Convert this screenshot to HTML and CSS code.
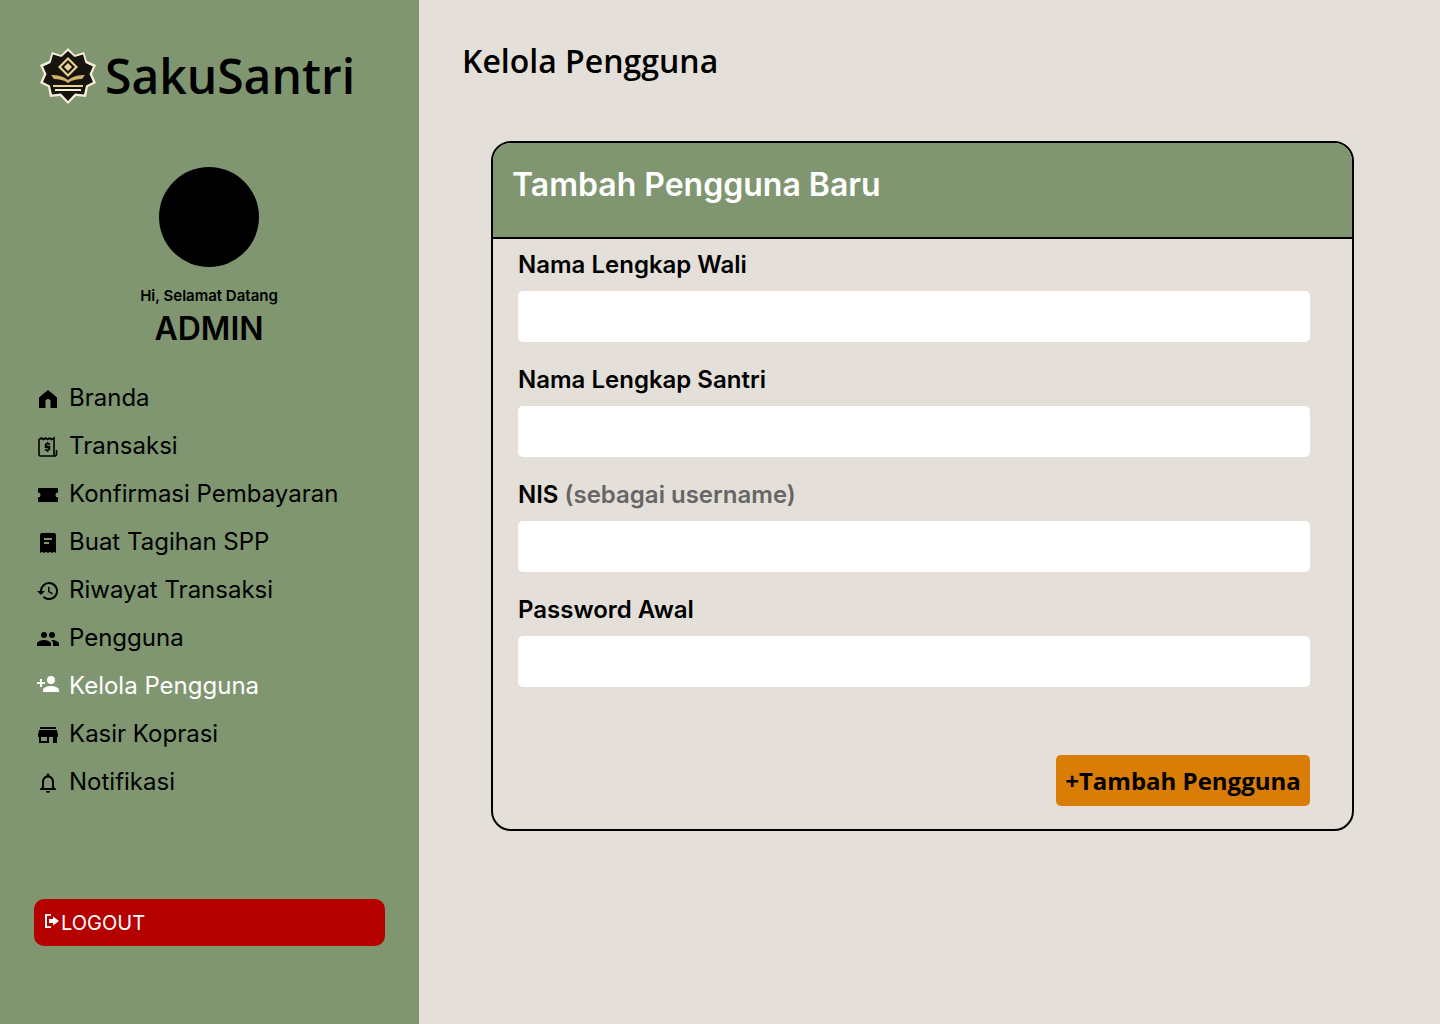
FILE: index.html
```html
<!DOCTYPE html>
<html lang="id">
<head>
    <meta charset="UTF-8">
    <meta name="viewport" content="width=device-width, initial-scale=1.0">
    <title>Kelola Pengguna</title>
    <link rel="stylesheet" href="styles.css">
</head>
<body>
    <div class="layout">
        <!-- Sidebar -->
        <aside class="sidebar">
            <div class="brand">
                <svg class="brand-logo" viewBox="0 0 56 56">
                    <polygon points="28,0 35,7 44,4 47,13 56,17 52,26 56,35 48,39 46,49 36,48 28,56 20,48 10,49 8,39 0,35 4,26 0,17 9,13 12,4 21,7" fill="#f4efd8"/>
                    <polygon points="28,3 34.500,9 43,6.500 45.500,15 53,18.500 49.500,26 53,34 46,37.500 44,46.500 35,45.500 28,53 21,45.500 12,46.500 10,37.500 3,34 6.500,26 3,18.500 10.500,15 13,6.500 21.500,9" fill="#17130e"/>
                    <polygon points="28,9 38,19 28,29 18,19" fill="#e8d48f"/>
                    <polygon points="28,12 35,19 28,26 21,19" fill="#17130e"/>
                    <polygon points="28,15 32,19 28,23 24,19" fill="#e8d48f"/>
                    <path d="M11 27c6 0 12 1 17 5 5-4 11-5 17-5l-3 4c-5 0-10 1-14 4-4-3-9-4-14-4z" fill="#cdb269"/>
                    <rect x="13" y="37" width="30" height="2" fill="#e8d48f"/>
                    <rect x="15" y="41" width="26" height="2" fill="#f4efd8"/>
                </svg>
                <span class="brand-name">SakuSantri</span>
            </div>

            <div class="profile">
                <div class="avatar"></div>
                <div class="greeting">Hi, Selamat Datang</div>
                <div class="role">ADMIN</div>
            </div>

            <nav class="menu">
                <a class="menu-item">
                    <svg class="menu-icon" viewBox="0 0 24 24"><path d="M12 3 3 10.500V21h6.500v-6.500a2.500 2.500 0 0 1 5 0V21H21V10.500z"/></svg>
                    <span>Branda</span>
                </a>
                <a class="menu-item">
                    <svg class="menu-icon" viewBox="0 0 24 24"><path d="M3 4.500 5.500 3l2 1.500L9.500 3l2 1.500L13.500 3l2 1.500L18 3v13" fill="none" stroke="#000" stroke-width="1.600"/><path d="M3 4v15.500A1.500 1.500 0 0 0 4.500 21h14a2 2 0 0 0 2-2v-4" fill="none" stroke="#000" stroke-width="1.600"/><path d="M18 16v3a2 2 0 0 0 2 2" fill="none" stroke="#000" stroke-width="1.600"/><path d="M10.800 7h1.600v1.300h1.800v1.500h-3.300v1h2.400a1 1 0 0 1 1 1v2.400a1 1 0 0 1-1 1h-.9V17h-1.600v-1.300H8.900v-1.500h3.300v-1H9.800a1 1 0 0 1-1-1V9.300a1 1 0 0 1 1-1h1z"/></svg>
                    <span>Transaksi</span>
                </a>
                <a class="menu-item">
                    <svg class="menu-icon" viewBox="0 0 24 24"><path d="M2 5h20v4.500a2.500 2.500 0 0 0 0 5V19H2v-4.500a2.500 2.500 0 0 0 0-5z"/><path d="M8 7.500h1.500V10H8zM8 14h1.500v2.500H8zM14.500 7.500H16V10h-1.500zM14.500 14H16v2.500h-1.500z" fill="#7f9671" opacity="0"/></svg>
                    <span>Konfirmasi Pembayaran</span>
                </a>
                <a class="menu-item">
                    <svg class="menu-icon" viewBox="0 0 24 24"><path d="M6 2h12a2 2 0 0 1 2 2v18l-2-1.300-2 1.300-2-1.300-2 1.300-2-1.300-2 1.300-2-1.300L4 22V4a2 2 0 0 1 2-2z"/><path d="M8 7h8v2H8zM8 11h5v2H8z" fill="#7f9671"/></svg>
                    <span>Buat Tagihan SPP</span>
                </a>
                <a class="menu-item">
                    <svg class="menu-icon" viewBox="0 0 24 24"><path d="M13 3a9 9 0 0 0-9 9H1l3.900 3.900L9 12H6a7 7 0 1 1 2.100 5l-1.400 1.400A9 9 0 1 0 13 3zm-1 5v5l4.300 2.500.7-1.200-3.500-2.100V8z"/></svg>
                    <span>Riwayat Transaksi</span>
                </a>
                <a class="menu-item">
                    <svg class="menu-icon" viewBox="0 0 24 24"><path d="M16 11a3 3 0 1 0 0-6 3 3 0 0 0 0 6zm-8 0a3 3 0 1 0 0-6 3 3 0 0 0 0 6zm0 2c-2.300 0-7 1.200-7 3.500V19h14v-2.500C15 14.200 10.300 13 8 13zm8 0h-1c1.200.9 2 2 2 3.500V19h6v-2.500c0-2.300-4.700-3.500-7-3.500z"/></svg>
                    <span>Pengguna</span>
                </a>
                <a class="menu-item active">
                    <svg class="menu-icon wide" viewBox="0 0 24 24"><path d="M15 12a4 4 0 1 0 0-8 4 4 0 0 0 0 8zm-9-2V7H4v3H1v2h3v3h2v-3h3v-2zm9 4c-2.700 0-8 1.300-8 4v2h16v-2c0-2.700-5.300-4-8-4z"/></svg>
                    <span>Kelola Pengguna</span>
                </a>
                <a class="menu-item">
                    <svg class="menu-icon" viewBox="0 0 24 24"><path d="M4 4h16v2H4zM3 7h18l1 5v2h-1v6h-4v-6h-4v6H3v-6H2v-2zm2 7v4h6v-4z"/></svg>
                    <span>Kasir Koprasi</span>
                </a>
                <a class="menu-item">
                    <svg class="menu-icon" viewBox="0 0 24 24"><path d="M12 22a2 2 0 0 0 2-2h-4a2 2 0 0 0 2 2zm6-6v-5c0-3.100-1.600-5.600-4.500-6.300V4a1.500 1.500 0 0 0-3 0v.7C7.600 5.400 6 7.900 6 11v5l-2 2v1h16v-1zm-2 1H8v-6c0-2.500 1.500-4.500 4-4.500s4 2 4 4.500z"/></svg>
                    <span>Notifikasi</span>
                </a>
            </nav>

            <button class="logout-button">
                <svg class="logout-icon" viewBox="0 0 18 18"><path d="M8 2H2v14h6v-1.800H4V3.800h4z"/><path d="M10 4.500 16 9l-6 4.500V11H6V7h4z"/></svg>
                <span>LOGOUT</span>
            </button>
        </aside>

        <!-- Konten utama -->
        <main class="content">
            <h1 class="page-title">Kelola Pengguna</h1>

            <section class="form-card">
                <h2 class="form-header">Tambah Pengguna Baru</h2>
                <form class="form-body">
                    <div class="form-group">
                        <label class="form-label">Nama Lengkap Wali</label>
                        <input class="form-input" type="text">
                    </div>
                    <div class="form-group">
                        <label class="form-label">Nama Lengkap Santri</label>
                        <input class="form-input" type="text">
                    </div>
                    <div class="form-group">
                        <label class="form-label">NIS <span class="form-hint">(sebagai username)</span></label>
                        <input class="form-input" type="text">
                    </div>
                    <div class="form-group">
                        <label class="form-label">Password Awal</label>
                        <input class="form-input" type="password">
                    </div>
                    <div class="form-actions">
                        <button class="submit-button" type="button">+Tambah Pengguna</button>
                    </div>
                </form>
            </section>
        </main>
    </div>
</body>
</html>
```

FILE: styles.css
```css
* {
    margin: 0;
    padding: 0;
    box-sizing: border-box;
}

body {
    font-family: Inter, "Liberation Sans", sans-serif;
    background: #e4e0d9;
    color: #000;
}

.layout {
    display: flex;
    height: 1024px;
    overflow: hidden;
}

/* Sidebar */
.sidebar {
    width: 419px;
    flex-shrink: 0;
    background: #7f9671;
    padding: 48px 34px 0;
    display: flex;
    flex-direction: column;
}

.brand {
    display: flex;
    align-items: center;
    height: 56px;
    padding-left: 6px;
}

.brand-logo {
    width: 56px;
    height: 56px;
    margin-right: 9px;
    flex-shrink: 0;
}

.brand-name {
    font-family: "Open Sans", sans-serif;
    font-size: 48px;
    font-weight: 600;
    line-height: 56px;
    white-space: nowrap;
}

.profile {
    margin-top: 63px;
    display: flex;
    flex-direction: column;
    align-items: center;
    padding-right: 1px;
}

.avatar {
    width: 100px;
    height: 100px;
    border-radius: 50%;
    background: #000;
}

.greeting {
    margin-top: 19px;
    font-size: 15px;
    font-weight: 600;
    line-height: 20px;
}

.role {
    margin-top: 4px;
    font-size: 32px;
    font-weight: 600;
    line-height: 38px;
}

.menu {
    margin-top: 26px;
    display: flex;
    flex-direction: column;
}

.menu-item {
    display: flex;
    align-items: center;
    height: 48px;
    font-size: 24px;
    line-height: 48px;
    white-space: nowrap;
}

.menu-item.active {
    color: #fff;
}

.menu-icon {
    width: 24px;
    height: 24px;
    margin: 2px 9px 0 2px;
    flex-shrink: 0;
}

.menu-item.active .menu-icon {
    fill: #fff;
    margin-top: -4px;
}

.logout-button {
    margin-top: 93px;
    width: 351px;
    height: 47px;
    background: #b50000;
    color: #fff;
    border: none;
    border-radius: 10px;
    display: flex;
    align-items: center;
    padding-left: 9px;
    font-family: Inter, sans-serif;
    font-size: 20px;
    cursor: pointer;
}

.logout-icon {
    width: 18px;
    height: 18px;
    fill: #fff;
    margin-top: -3px;
}

/* Konten utama */
.content {
    flex: 1;
    padding: 39px 86px 0 43px;
}

.page-title {
    font-family: "Open Sans", sans-serif;
    font-size: 32px;
    font-weight: 600;
    line-height: 44px;
}

.form-card {
    margin: 58px 0 0 29px;
    height: 690px;
    border: 2px solid #000;
    border-radius: 20px;
    overflow: hidden;
}

.form-header {
    height: 96px;
    background: #7f9671;
    border-bottom: 2px solid #000;
    padding: 22px 0 0 19px;
    color: #fff;
    font-size: 32px;
    font-weight: 600;
    line-height: 40px;
}

.form-body {
    padding: 10px 42px 0 25px;
}

.form-group {
    margin-bottom: 22px;
}

.form-label {
    display: block;
    font-size: 24px;
    font-weight: 600;
    line-height: 32px;
    margin-bottom: 10px;
}

.form-hint {
    color: #666;
}

.form-input {
    display: block;
    width: 100%;
    height: 51px;
    background: #fff;
    border: none;
    border-radius: 5px;
}

.form-actions {
    display: flex;
    justify-content: flex-end;
    margin-top: 68px;
}

.submit-button {
    width: 254px;
    height: 51px;
    background: #d97d06;
    color: #000;
    border: none;
    border-radius: 5px;
    font-family: "Open Sans", sans-serif;
    font-size: 24px;
    font-weight: 700;
    cursor: pointer;
}
```
